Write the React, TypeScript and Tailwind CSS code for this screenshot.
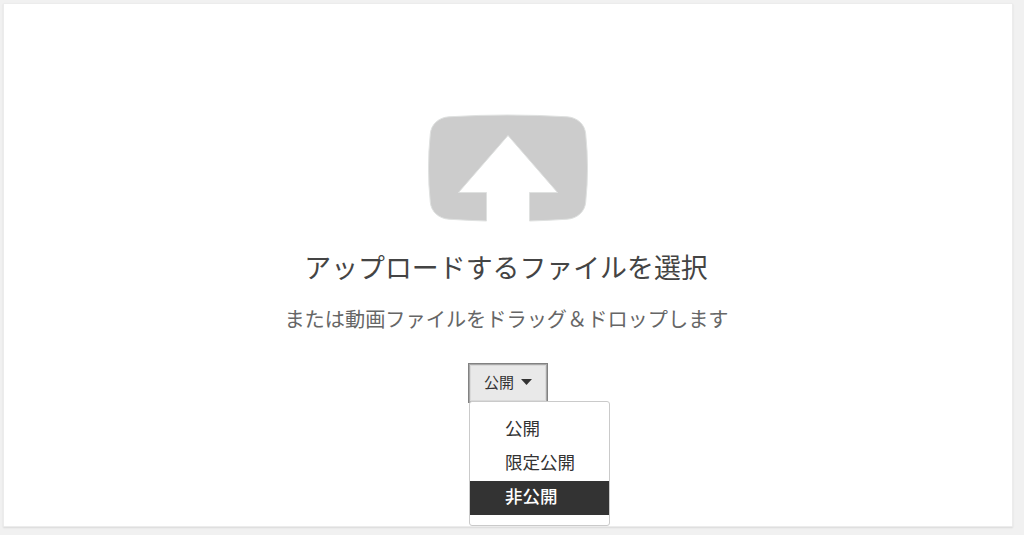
import React, { useState } from 'react';
import clsx from 'clsx';

const PRIVACY_OPTIONS = [
  { value: 'public', label: '公開' },
  { value: 'unlisted', label: '限定公開' },
  { value: 'private', label: '非公開' },
];

function UploadIcon() {
  return (
    <svg className="block w-[162px] h-[108px]" viewBox="0 0 162 108" aria-hidden="true">
      <path
        fill="#cccccc"
        stroke="#dfe1e0"
        strokeWidth="1"
        d="M22 2.8 Q81 -0.8 140 2.8 C151 3.5 158 11 158.7 20 Q162.3 54 158.7 88 C158 97 151 104.5 140 105.2 Q121 106.5 102.5 107 V78.5 H130.5 L81 21.5 L31.5 78.5 H59.5 V107 Q41 106.5 22 105.2 C11 104.5 4 97 3.3 88 Q-0.3 54 3.3 20 C4 11 11 3.5 22 2.8 Z"
      />
    </svg>
  );
}

function PrivacySelect() {
  const [selected, setSelected] = useState('public');
  const [highlighted, setHighlighted] = useState('private');
  const [open, setOpen] = useState(true);
  const current = PRIVACY_OPTIONS.find((opt) => opt.value === selected);

  return (
    <div className="relative mt-7">
      <button
        type="button"
        className="flex h-10 w-20 items-center border border-[#828282] bg-[#e9e9e9] pb-[2px] pl-[15px] text-[15px] leading-5 text-[#333333] shadow-[inset_0_0_0_1px_#a8a8a8,inset_0_0_0_2px_#dadada]"
        onClick={() => setOpen(!open)}
      >
        <span className="pb-px">{current?.label}</span>
        <svg className="ml-[7px] h-[6px] w-[11px]" viewBox="0 0 11 6" aria-hidden="true">
          <path d="M0 0H11L5.5 6Z" fill="#333333" />
        </svg>
      </button>

      {open && (
        <ul className="absolute left-px top-[38px] h-[125px] w-[141px] rounded-[3px] border-[1.5px] border-[#cacaca] bg-white pt-[11px]">
          {PRIVACY_OPTIONS.map((opt) => (
            <li
              key={opt.value}
              className={clsx(
                'flex h-[34px] cursor-pointer items-center pb-[5px] pl-[35px] text-[17.5px] leading-none',
                highlighted === opt.value ? 'bg-[#333333] font-medium text-white' : 'text-[#333333]'
              )}
              onMouseEnter={() => setHighlighted(opt.value)}
              onClick={() => { setSelected(opt.value); setOpen(false); }}
            >
              {opt.label}
            </li>
          ))}
        </ul>
      )}
    </div>
  );
}

export default function App() {
  return (
    <div className="h-[535px] overflow-hidden bg-[#f1f1f1] pl-[3px] pr-[11px] pt-[3px] font-['Noto_Sans_CJK_JP',sans-serif]">
      <main className="flex h-[524px] flex-col items-center rounded-[1px] border border-[#ececec] bg-white pt-[110px] shadow-[0_1px_2px_rgba(0,0,0,0.1)]">
        <UploadIcon />
        <h1 className="mt-[25px] mr-[4px] whitespace-nowrap text-[26.9px] leading-10 font-normal text-[#444444]">
          アップロードするファイルを選択
        </h1>
        <p className="mt-4 mr-[3px] whitespace-nowrap text-[20.2px] leading-8 text-[#666666]">
          または動画ファイルをドラッグ＆ドロップします
        </p>
        <PrivacySelect />
      </main>
    </div>
  );
}
